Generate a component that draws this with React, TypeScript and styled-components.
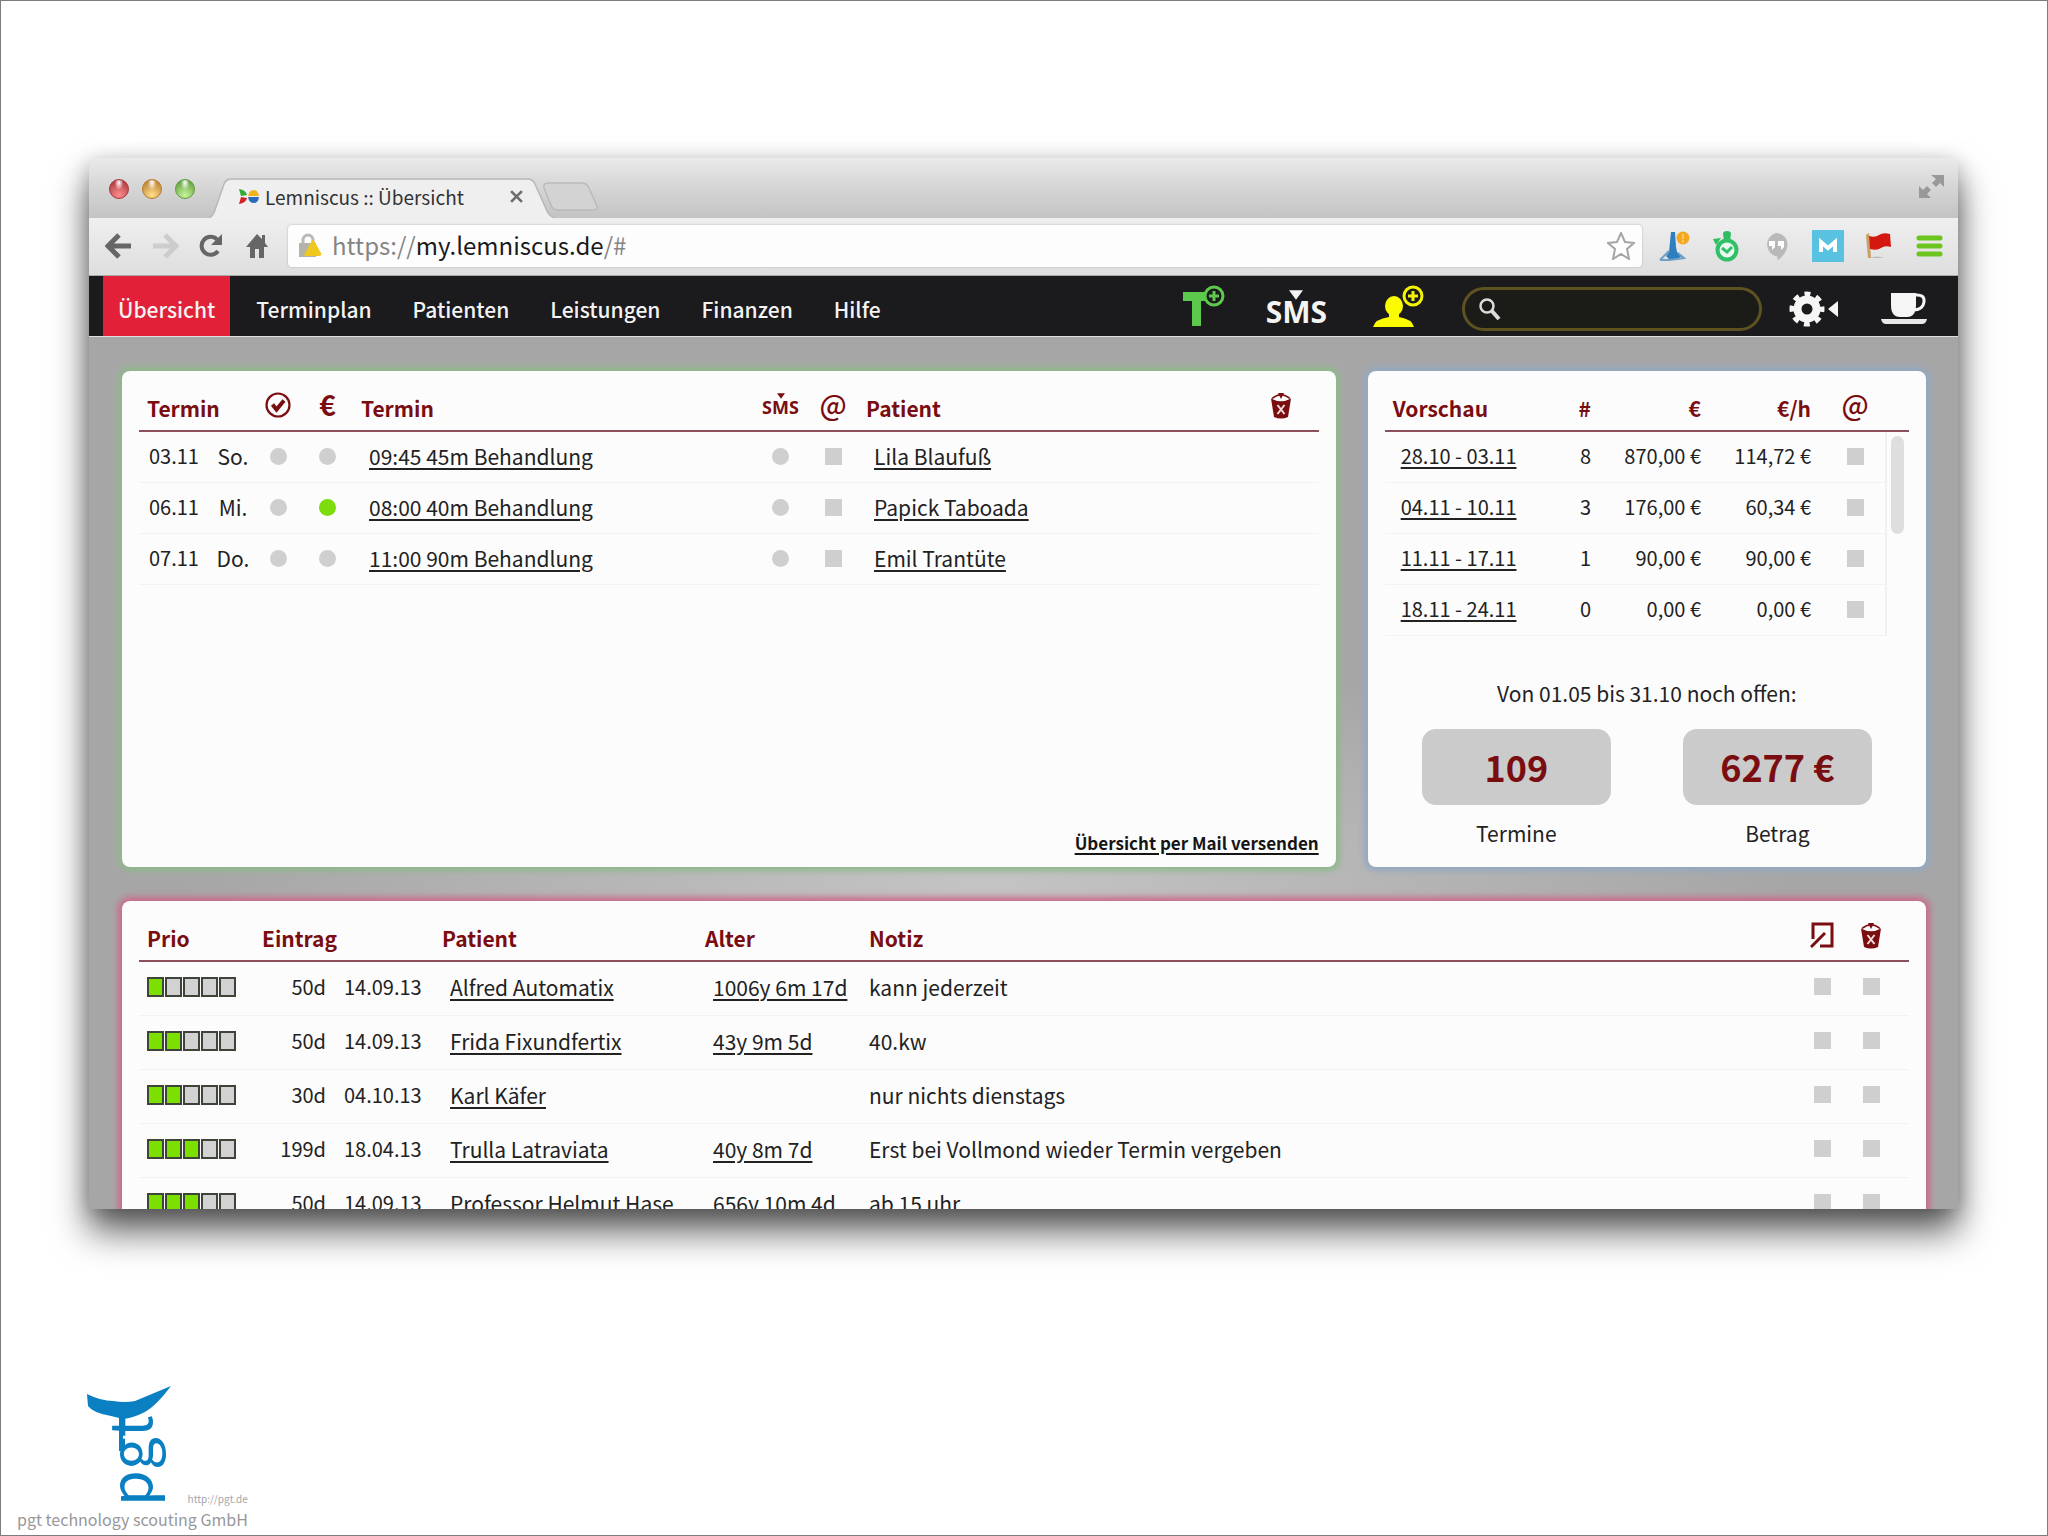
import React from "react";
import styled, { createGlobalStyle } from "styled-components";

const Global = createGlobalStyle`
  * { box-sizing: border-box; }
  body { margin: 0; background: #fff; }
  body, button, input { font-family: "Noto Sans CJK SC", "Noto Sans", sans-serif; font-size: 21px; line-height: 24px; color: #222; }
  button { padding: 0; border: 0; background: none; cursor: pointer; }
  a { color: inherit; }
  svg { display: block; flex: none; }
`;

const maroon = "#7a0d10";

/* ---------- page frame ---------- */

const Page = styled.div`
  height: 100vh;
  display: flex;
  flex-direction: column;
  border: 1px solid #7c7c80;
  padding: 157px 89px 0 88px;
`;

const Window = styled.main`
  flex: 1;
  min-height: 0;
  display: flex;
  flex-direction: column;
  border-radius: 4px 4px 0 0;
  box-shadow: 0 22px 36px rgba(0, 0, 0, 0.65), 0 4px 20px rgba(0, 0, 0, 0.2);
`;

/* ---------- browser chrome ---------- */

const TabStrip = styled.div`
  display: flex;
  align-items: flex-end;
  height: 60px;
  flex: none;
  padding: 0 14px 0 20px;
  background: linear-gradient(#eaeaea, #d9d9d9 40%, #c3c3c3);
  border-radius: 4px 4px 0 0;
`;

const Lights = styled.div`
  display: flex;
  gap: 13px;
  height: 40px;
  padding-top: 1px;
`;

const Light = styled.button<{ $edge: string; $core: string }>`
  width: 20px;
  height: 20px;
  border-radius: 50%;
  border: 1px solid ${(p) => p.$edge};
  background: radial-gradient(ellipse at 50% 15%, #fff 0, rgba(255, 255, 255, 0) 35%),
    radial-gradient(circle at 50% 85%, ${(p) => p.$core}, ${(p) => p.$edge} 90%);
`;

const Tab = styled.div`
  position: relative;
  display: flex;
  align-items: center;
  width: 346px;
  height: 40px;
  margin-left: 14px;
  padding: 0 32px 3px 29px;
  font-size: 19px;
  color: #333;
`;

const TabShape = styled.svg`
  position: absolute;
  inset: 0;
`;

const TabTitle = styled.span`
  position: relative;
  flex: 1;
  margin-left: 6px;
  white-space: nowrap;
`;

const TabIcon = styled.span`
  position: relative;
`;

const TabClose = styled.button`
  position: relative;
`;

const NewTab = styled.button`
  margin: 0 auto 7px -12px;
`;

const Fullscreen = styled.button`
  align-self: center;
  padding-bottom: 4px;
`;

const Toolbar = styled.div`
  display: flex;
  align-items: center;
  flex: none;
  height: 58px;
  padding: 0 12px 2px 16px;
  background: linear-gradient(#efefef, #dedede);
  border-bottom: 1px solid #aaa;
`;

const History = styled.div`
  display: flex;
  gap: 18px;
  margin-right: 17px;
`;

const Address = styled.form`
  flex: 1;
  display: flex;
  align-items: center;
  height: 42px;
  padding: 0 7px 0 10px;
  background: #fdfdfe;
  border-radius: 4px;
  box-shadow: 0 0 2px #a9a9a9;
`;

const Url = styled.a`
  flex: 1;
  margin-left: 10px;
  padding-bottom: 2px;
  font-size: 24px;
  color: #858585;
  text-decoration: none;
`;

const Host = styled.span`
  color: #1a1a1a;
`;

const Extensions = styled.div`
  display: flex;
  align-items: center;
  gap: 20px;
  margin-left: 16px;
`;

/* ---------- application bar ---------- */

const AppBar = styled.header`
  display: flex;
  align-items: center;
  flex: none;
  height: 61px;
  padding: 0 31px 0 14px;
  background: #1b1a1c;
  border-bottom: 1px solid #e0e0e0;
`;

const Menu = styled.nav`
  display: flex;
  gap: 11px;
  height: 100%;
  margin-right: auto;
`;

const MenuLink = styled.a<{ $active?: boolean }>`
  display: flex;
  align-items: center;
  padding: 6px 15px 0;
  color: #f3f3f3;
  font-weight: 500;
  text-decoration: none;
  background: ${(p) => (p.$active ? "#e22037" : "none")};
`;

const Tools = styled.div`
  display: flex;
  align-items: center;
  padding-top: 6px;
`;

const Tool = styled.button<{ $gap: number; $raised?: boolean }>`
  margin-right: ${(p) => p.$gap}px;
  padding-bottom: ${(p) => (p.$raised ? 6 : 0)}px;
`;

const Search = styled.label`
  display: flex;
  align-items: center;
  width: 300px;
  height: 44px;
  margin-right: 27px;
  padding: 0 14px;
  border: 3px solid #5d5220;
  border-radius: 22px;
  background: #1b1b18;
`;

const SearchInput = styled.input`
  flex: 1;
  min-width: 0;
  border: 0;
  outline: 0;
  background: none;
  color: #fff;
`;

const SmsStack = styled.span<{ $large?: boolean }>`
  display: flex;
  flex-direction: column;
  align-items: center;
  font-family: "Noto Sans", sans-serif;
  font-weight: 700;
  font-size: ${(p) => (p.$large ? 30 : 18)}px;
  line-height: ${(p) => (p.$large ? 24 : 16)}px;
  padding-bottom: ${(p) => (p.$large ? 4 : 2)}px;
  color: ${(p) => (p.$large ? "#f4f4f4" : maroon)};
`;

/* ---------- dashboard ---------- */

const Dashboard = styled.div`
  flex: 1;
  min-height: 0;
  overflow: hidden;
  display: grid;
  grid-template-columns: 1213fr 558fr;
  grid-template-rows: 496px auto;
  gap: 34px 32px;
  padding: 34px 32px 0 33px;
  background: radial-gradient(ellipse 800px 220px at 48% 545px, #c4c4c4, #a7a6a7);
`;

const Panel = styled.section<{ $glow: string; $wide?: boolean }>`
  display: flex;
  flex-direction: column;
  min-width: 0;
  grid-column: ${(p) => (p.$wide ? "1 / -1" : "auto")};
  padding: 0 17px 12px;
  border-radius: 8px;
  background: #fcfcfd;
  box-shadow: 0 0 6px 4px ${(p) => p.$glow};
`;

const Table = styled.table`
  width: 100%;
  table-layout: fixed;
  border-collapse: separate;
  border-spacing: 0;
`;

const Col = styled.col<{ $w?: number }>`
  width: ${(p) => (p.$w ? p.$w + "px" : "auto")};
`;

type Align = "left" | "right" | "center";

const Th = styled.th<{ $align?: Align }>`
  height: 61px;
  padding: 0 ${(p) => (p.$align === "right" ? 14 : 0)}px 10px ${(p) => (p.$align ? 0 : 8)}px;
  vertical-align: bottom;
  text-align: ${(p) => p.$align ?? "left"};
  font-weight: 700;
  color: ${maroon};
  border-bottom: 2px solid #8b525c;
`;

const Glyph = styled.span<{ $bold?: boolean; $text?: boolean }>`
  display: flex;
  align-items: center;
  justify-content: center;
  height: 30px;
  padding-bottom: ${(p) => (p.$text ? 2 : 0)}px;
  font-size: 28px;
  line-height: 28px;
  font-weight: ${(p) => (p.$bold ? 700 : 500)};
`;

const Td = styled.td<{ $tall?: boolean; $num?: boolean; $align?: Align; $left?: number; $right?: number }>`
  height: ${(p) => (p.$tall ? 54 : 51)}px;
  padding: 0 ${(p) => p.$right ?? 0}px ${(p) => (p.$tall ? 4 : 2)}px ${(p) => p.$left ?? 0}px;
  font-size: ${(p) => (p.$num ? 20 : 21)}px;
  text-align: ${(p) => p.$align ?? "left"};
  white-space: nowrap;
  border-bottom: 1px solid #f3f3f4;
`;

const Link = styled.a`
  text-underline-offset: 3px;
  text-decoration-thickness: 2px;
`;

const Mark = styled.input.attrs({ type: "checkbox" })<{ $round?: boolean }>`
  appearance: none;
  display: block;
  width: 17px;
  height: 17px;
  margin: 0 auto;
  border-radius: ${(p) => (p.$round ? "50%" : "0")};
  background: #cfcfcf;
  &:checked { background: #7cdc0c; }
`;

const MailLink = styled.a`
  align-self: flex-end;
  margin-top: auto;
  font-size: 17px;
  font-weight: 700;
  color: #151515;
  text-underline-offset: 3px;
  text-decoration-thickness: 2px;
`;

const ScrollCell = styled.td`
  padding: 4px 5px 0 4px;
  vertical-align: top;
  border-left: 2px solid #f1f1f2;
`;

const Thumb = styled.div`
  height: 98px;
  border-radius: 7px;
  background: #dedede;
`;

const Open = styled.p`
  margin: 45px 0 24px;
  text-align: center;
`;

const Totals = styled.div`
  display: flex;
  justify-content: center;
  gap: 72px;
`;

const Total = styled.div`
  width: 189px;
  text-align: center;
`;

const TotalValue = styled.div`
  padding: 19px 0 21px;
  margin-bottom: 16px;
  border-radius: 14px;
  background: #cbcbcc;
  color: ${maroon};
  font-size: 36px;
  line-height: 36px;
  font-weight: 700;
`;

const Bars = styled.div`
  display: flex;
  gap: 1px;
`;

const Bar = styled.span<{ $on: boolean }>`
  width: 17px;
  height: 20px;
  border: 2px solid #3f443b;
  background: ${(p) => (p.$on ? "#7be000" : "#d2d2d2")};
`;

/* ---------- footer ---------- */

const Footer = styled.footer`
  flex: none;
  height: 326px;
  display: flex;
  align-items: flex-end;
  margin-left: -72px;
`;

const Brand = styled.div`
  display: flex;
  flex-direction: column;
  color: #97979b;
`;

const BrandTop = styled.div`
  display: flex;
  align-items: flex-end;
  justify-content: space-between;
  padding-left: 68px;
`;

const BrandUrl = styled.a`
  font-size: 10px;
  line-height: 16px;
  text-decoration: none;
  color: #a5a5a8;
`;

const BrandName = styled.span`
  padding-bottom: 4px;
  font-size: 16px;
  white-space: nowrap;
`;

/* ---------- drawings ---------- */

const Sms = ({ large }: { large?: boolean }) => (
  <SmsStack $large={large}>
    <svg width={large ? 14 : 8} height={large ? 10 : 6} viewBox="0 0 12 8">
      <path d="M0 0h12L6 8z" fill="currentColor" />
    </svg>
    SMS
  </SmsStack>
);

const Trash = () => (
  <Glyph>
    <svg width="22" height="27" viewBox="0 0 22 27">
      <path d="M2 6.5Q11-1 20 6.5" fill="none" stroke={maroon} strokeWidth="1.6" />
      <path d="M8 1h6l-3 6z" fill={maroon} />
      <path d="M1 6.5Q11 12 21 6.5L18 25q-7 3-14 0z" fill={maroon} />
      <path d="M7.5 13l7 9M14.500 13l-7 9" stroke="#f3dede" strokeWidth="2" />
    </svg>
  </Glyph>
);

const CheckCircle = () => (
  <Glyph>
    <svg width="26" height="26" viewBox="0 0 26 26" fill="none" stroke={maroon}>
      <circle cx="13" cy="13" r="11.500" strokeWidth="2.200" />
      <path d="M7.500 12.500l4 5 7.500-9" strokeWidth="4" />
    </svg>
  </Glyph>
);

const EditBox = () => (
  <Glyph>
    <svg width="24" height="26" viewBox="0 0 24 26" fill="none" stroke={maroon} strokeWidth="3">
      <path d="M3 17V2h19v22H10" />
      <path d="M1 25L15 11" />
    </svg>
  </Glyph>
);

const Plus = ({ cx, cy, color }: { cx: number; cy: number; color: string }) => (
  <g fill="none" stroke={color}>
    <circle cx={cx} cy={cy} r="9" strokeWidth="3" fill="#1b1a1c" />
    <path d={`M${cx - 5} ${cy}h10M${cx} ${cy - 5}v10`} strokeWidth="3" />
  </g>
);

const arrow = "M14 2L3 13l11 11M4 13h22";

const appointments = [
  { date: "03.11", day: "So.", paid: false, slot: "09:45 45m Behandlung", patient: "Lila Blaufuß" },
  { date: "06.11", day: "Mi.", paid: true, slot: "08:00 40m Behandlung", patient: "Papick Taboada" },
  { date: "07.11", day: "Do.", paid: false, slot: "11:00 90m Behandlung", patient: "Emil Trantüte" },
];

const weeks = [
  ["28.10 - 03.11", "8", "870,00 €", "114,72 €"],
  ["04.11 - 10.11", "3", "176,00 €", "60,34 €"],
  ["11.11 - 17.11", "1", "90,00 €", "90,00 €"],
  ["18.11 - 24.11", "0", "0,00 €", "0,00 €"],
];

const waiting = [
  { prio: 1, days: "50d", date: "14.09.13", name: "Alfred Automatix", age: "1006y 6m 17d", note: "kann jederzeit" },
  { prio: 2, days: "50d", date: "14.09.13", name: "Frida Fixundfertix", age: "43y 9m 5d", note: "40.kw" },
  { prio: 2, days: "30d", date: "04.10.13", name: "Karl Käfer", age: "", note: "nur nichts dienstags" },
  { prio: 3, days: "199d", date: "18.04.13", name: "Trulla Latraviata", age: "40y 8m 7d", note: "Erst bei Vollmond wieder Termin vergeben" },
  { prio: 3, days: "50d", date: "14.09.13", name: "Professor Helmut Hase", age: "656y 10m 4d", note: "ab 15 uhr" },
];

const Chrome = () => (
  <>
    <TabStrip>
      <Lights>
        <Light $edge="#a8343c" $core="#ff8d8d" aria-label="Schließen" />
        <Light $edge="#b87a2c" $core="#ffe08a" aria-label="Minimieren" />
        <Light $edge="#5c9a3c" $core="#c8f59a" aria-label="Maximieren" />
      </Lights>
      <Tab>
        <TabShape width="346" height="40" viewBox="0 0 346 40">
          <path d="M0 40Q4 38 6 32L15 6Q17 1 23 1H318Q324 1 326 6L338 33Q341 39 346 40" fill="#efefef" stroke="#b8b8b8" strokeWidth="1.500" />
        </TabShape>
        <TabIcon>
          <svg width="21" height="15" viewBox="0 0 21 15">
            <path d="M1 0q7 1 8 6l-6 1z" fill="#35a83a" />
            <path d="M1 15q7-1 8-6l-6-1z" fill="#d3222a" />
            <path d="M10 7q1-6 6-6 4 0 5 6z" fill="#f0b51c" />
            <path d="M10 8q1 6 6 6 4 0 5-6z" fill="#2b6cb8" />
          </svg>
        </TabIcon>
        <TabTitle>Lemniscus :: Übersicht</TabTitle>
        <TabClose aria-label="Tab schließen">
          <svg width="13" height="13" viewBox="0 0 12 12" stroke="#6d6d6d" strokeWidth="2.500">
            <path d="M1 1l10 10M11 1L1 11" />
          </svg>
        </TabClose>
      </Tab>
      <NewTab aria-label="Neuer Tab">
        <svg width="56" height="29" viewBox="0 0 56 29">
          <path d="M5 1H38Q44 1 46 6L54 24Q55 28 50 28H15Q10 28 8 23L1 6Q0 1 5 1z" fill="#d3d3d3" stroke="#bababa" strokeWidth="1.500" />
        </svg>
      </NewTab>
      <Fullscreen aria-label="Vollbild">
        <svg width="25" height="25" viewBox="0 0 25 25" fill="#999">
          <path d="M12 1h13v12l-4-4-4 4-4-4 4-4z" />
          <path d="M0 12l4 4 4-4 4 4-4 4 4 4H0z" />
        </svg>
      </Fullscreen>
    </TabStrip>
    <Toolbar>
      <History>
        <button aria-label="Zurück">
          <svg width="28" height="26" viewBox="0 0 28 26" fill="none" stroke="#666" strokeWidth="5"><path d={arrow} /></svg>
        </button>
        <button aria-label="Vor">
          <svg width="28" height="26" viewBox="0 0 28 26" fill="none" stroke="#cdcdcd" strokeWidth="5"><path d={arrow} transform="matrix(-1 0 0 1 28 0)" /></svg>
        </button>
        <button aria-label="Neu laden">
          <svg width="28" height="26" viewBox="0 0 28 26">
            <path d="M21 18A9 9 0 1 1 20 6.500" fill="none" stroke="#666" strokeWidth="4" />
            <path d="M25 1v11H14z" fill="#666" />
          </svg>
        </button>
        <button aria-label="Startseite">
          <svg width="28" height="26" viewBox="0 0 28 26" fill="#666">
            <path d="M14 1L3 14h4v11h5v-9h4v9h5V14h4l-3-4V2h-3v4z" />
          </svg>
        </button>
      </History>
      <Address onSubmit={(e) => e.preventDefault()}>
        <svg width="24" height="25" viewBox="0 0 24 25">
          <path d="M5 12V7a5 5 0 0 1 10 0v5" fill="none" stroke="#b9b9b9" strokeWidth="3" />
          <path d="M1 10h17v14H1z" fill="#b5b2ab" />
          <path d="M15 6l8 14q1 3-2 3H8q-3 0-1-3z" fill="#eec81c" />
        </svg>
        <Url href="#">https://<Host>my.lemniscus.de</Host>/#</Url>
        <button type="button" aria-label="Lesezeichen">
          <svg width="28" height="28" viewBox="0 0 28 28">
            <path d="M14 1l4 9 9 1-7 6 2 10-8-5-8 5 2-10-7-6 9-1z" fill="#fff" stroke="#a5a5a5" strokeWidth="2" />
          </svg>
        </button>
      </Address>
      <Extensions>
        <button aria-label="Erweiterung Statue">
          <svg width="32" height="32" viewBox="0 0 32 32">
            <path d="M13 2h4l1 15 1 5 5 4-5 3h-8l-3-3 3-4z" fill="#2f7fc0" />
            <path d="M2 30l9-9M2 30h10l14-2-6-5" fill="none" stroke="#6f9fc4" strokeWidth="2" />
            <circle cx="25" cy="8" r="6.500" fill="#f4a822" />
            <path d="M25 4v5M25 10v3" stroke="#fbc65c" strokeWidth="2" />
          </svg>
        </button>
        <button aria-label="Erweiterung Uhr">
          <svg width="32" height="32" viewBox="0 0 32 32">
            <path d="M13 4q0-3 4-3t4 3l-1 7h-6zM3 9l8-1-5 7z" fill="#2fbe62" />
            <circle cx="17" cy="20" r="9.500" fill="#eafaf0" stroke="#2fc068" strokeWidth="4" />
            <path d="M12 18l5 4 5-5" fill="none" stroke="#2fc068" strokeWidth="3" />
          </svg>
        </button>
        <button aria-label="Hangouts">
          <svg width="30" height="32" viewBox="0 0 30 32">
            <path d="M14 3a11.500 11.500 0 0 1 11.500 11.500c0 7-5 12-10 16v-4A12 12 0 0 1 14 3z" fill="#b9b9b9" />
            <path d="M7 11h6v6l-3 3v-4H7zM16 11h6v6l-3 3v-4h-3z" fill="#fff" />
          </svg>
        </button>
        <button aria-label="Erweiterung M">
          <svg width="32" height="32" viewBox="0 0 32 32">
            <path d="M0 0h32v32H0z" fill="#58c2e0" />
            <path d="M9 22V12l7 6 7-6v10" fill="none" stroke="#fff" strokeWidth="4" />
          </svg>
        </button>
        <button aria-label="Erweiterung Flagge">
          <svg width="28" height="32" viewBox="0 0 28 32">
            <path d="M5 28q8-3 15 0z" fill="#bbb" />
            <path d="M2 5l3-2 2 25H4z" fill="#c9a060" />
            <path d="M5 6q6 2 10-1t11-1l1 13q-6-2-10 1t-11 1z" fill="#d4180f" />
          </svg>
        </button>
        <button aria-label="Menü">
          <svg width="34" height="32" viewBox="0 0 34 32" stroke="#6cc41e" strokeWidth="5" strokeLinecap="round">
            <path d="M7 8h21M7 16h21M7 24h21" />
          </svg>
        </button>
      </Extensions>
    </Toolbar>
  </>
);

const TopBar = () => (
  <AppBar>
    <Menu>
      {["Übersicht", "Terminplan", "Patienten", "Leistungen", "Finanzen", "Hilfe"].map((m, i) => (
        <MenuLink key={m} href="#" $active={i === 0}>{m}</MenuLink>
      ))}
    </Menu>
    <Tools>
      <Tool $gap={41} $raised aria-label="Neuer Termin">
        <svg width="43" height="42" viewBox="0 0 43 42">
          <path d="M1 7h27v9h-9v25h-9V16H1z" fill="#5cc84c" />
          <Plus cx={32} cy={11} color="#5cc84c" />
        </svg>
      </Tool>
      <Tool $gap={45}><Sms large /></Tool>
      <Tool $gap={36} $raised aria-label="Neuer Patient">
        <svg width="54" height="44" viewBox="0 0 54 44">
          <g fill="#fcfc00">
            <ellipse cx="22" cy="22" rx="9" ry="10" />
            <path d="M17 28h10v5q13 2 15 10H1q2-8 16-10z" />
          </g>
          <Plus cx={41} cy={12} color="#f4f400" />
        </svg>
      </Tool>
      <Search>
        <svg width="22" height="23" viewBox="0 0 22 23" fill="none" stroke="#dcdcdc">
          <circle cx="8" cy="8" r="6.500" strokeWidth="2.500" />
          <path d="M12 12l8 9" strokeWidth="4" />
        </svg>
        <SearchInput aria-label="Suche" />
      </Search>
      <Tool $gap={42} aria-label="Einstellungen">
        <svg width="50" height="36" viewBox="0 0 50 36">
          <g fill="none" stroke="#f5f5f5">
            <circle cx="18" cy="18" r="9.500" strokeWidth="8" />
            <circle cx="18" cy="18" r="15" strokeWidth="5" strokeDasharray="5.890 5.890" strokeDashoffset="2.945" />
          </g>
          <path d="M49 10v16l-10-8z" fill="#f5f5f5" />
        </svg>
      </Tool>
      <Tool $gap={0} aria-label="Pause">
        <svg width="46" height="34" viewBox="0 0 46 34">
          <path d="M10 1h25v12q0 12-9 12h-7q-9 0-9-12z" fill="#f5f5f5" />
          <path d="M34 3q10-1 9 7t-11 8" fill="none" stroke="#f5f5f5" strokeWidth="3" />
          <path d="M0 27h46q-1 5-5 5H5q-4 0-5-5z" fill="#e8e8e8" />
        </svg>
      </Tool>
    </Tools>
  </AppBar>
);

const Appointments = () => (
  <Panel $glow="#8fb98b">
    <Table>
      <colgroup>
        {[73, 42, 48, 51, 400, 55, 50].map((w, i) => <Col key={i} $w={w} />)}
        <Col />
        <Col $w={76} />
      </colgroup>
      <thead>
        <tr>
          <Th colSpan={2}>Termin</Th>
          <Th $align="center" aria-label="Erledigt"><CheckCircle /></Th>
          <Th $align="center"><Glyph $bold $text>€</Glyph></Th>
          <Th>Termin</Th>
          <Th $align="center"><Glyph><Sms /></Glyph></Th>
          <Th $align="center"><Glyph $text>@</Glyph></Th>
          <Th>Patient</Th>
          <Th $align="center" aria-label="Löschen"><Trash /></Th>
        </tr>
      </thead>
      <tbody>
        {appointments.map((a) => (
          <tr key={a.date}>
            <Td $num $left={10}>{a.date}</Td>
            <Td $align="center">{a.day}</Td>
            <Td><Mark $round aria-label="Erledigt" /></Td>
            <Td><Mark $round defaultChecked={a.paid} aria-label="Bezahlt" /></Td>
            <Td $left={16}><Link href="#">{a.slot}</Link></Td>
            <Td><Mark $round aria-label="SMS" /></Td>
            <Td><Mark aria-label="E-Mail" /></Td>
            <Td $left={16}><Link href="#">{a.patient}</Link></Td>
            <Td />
          </tr>
        ))}
      </tbody>
    </Table>
    <MailLink href="#">Übersicht per Mail versenden</MailLink>
  </Panel>
);

const Preview = () => (
  <Panel $glow="#93a9c0">
    <Table>
      <colgroup>
        <Col />
        {[66, 110, 110, 60, 24].map((w, i) => <Col key={i} $w={w} />)}
      </colgroup>
      <thead>
        <tr>
          <Th>Vorschau</Th>
          <Th $align="right">#</Th>
          <Th $align="right">€</Th>
          <Th $align="right">€/h</Th>
          <Th $align="center"><Glyph $text>@</Glyph></Th>
          <Th />
        </tr>
      </thead>
      <tbody>
        {weeks.map((w, i) => (
          <tr key={w[0]}>
            <Td $num $left={16}><Link href="#">{w[0]}</Link></Td>
            <Td $num $align="right" $right={14}>{w[1]}</Td>
            <Td $num $align="right" $right={14}>{w[2]}</Td>
            <Td $num $align="right" $right={14}>{w[3]}</Td>
            <Td><Mark aria-label="E-Mail" /></Td>
            {i === 0 && <ScrollCell rowSpan={4}><Thumb /></ScrollCell>}
          </tr>
        ))}
      </tbody>
    </Table>
    <Open>Von 01.05 bis 31.10 noch offen:</Open>
    <Totals>
      <Total><TotalValue>109</TotalValue>Termine</Total>
      <Total><TotalValue>6277 €</TotalValue>Betrag</Total>
    </Totals>
  </Panel>
);

const WaitingList = () => (
  <Panel $glow="#c96c8c" $wide>
    <Table>
      <colgroup>
        {[115, 80, 100, 263, 164].map((w, i) => <Col key={i} $w={w} />)}
        <Col />
        {[50, 48, 14].map((w, i) => <Col key={i} $w={w} />)}
      </colgroup>
      <thead>
        <tr>
          <Th>Prio</Th>
          <Th colSpan={2}>Eintrag</Th>
          <Th>Patient</Th>
          <Th>Alter</Th>
          <Th>Notiz</Th>
          <Th $align="center" aria-label="Bearbeiten"><EditBox /></Th>
          <Th $align="center" aria-label="Löschen"><Trash /></Th>
          <Th />
        </tr>
      </thead>
      <tbody>
        {waiting.map((w) => (
          <tr key={w.name}>
            <Td $tall $left={8}>
              <Bars role="img" aria-label={`Priorität ${w.prio} von 5`}>
                {[1, 2, 3, 4, 5].map((n) => <Bar key={n} $on={n <= w.prio} />)}
              </Bars>
            </Td>
            <Td $tall $num $align="right" $right={8}>{w.days}</Td>
            <Td $tall $num $left={10}>{w.date}</Td>
            <Td $tall $left={16}><Link href="#">{w.name}</Link></Td>
            <Td $tall $left={16}>{w.age && <Link href="#">{w.age}</Link>}</Td>
            <Td $tall $left={8}>{w.note}</Td>
            <Td $tall><Mark aria-label="Bearbeiten" /></Td>
            <Td $tall><Mark aria-label="Löschen" /></Td>
            <Td $tall />
          </tr>
        ))}
      </tbody>
    </Table>
  </Panel>
);

const App = () => (
  <>
    <Global />
    <Page>
      <Window>
        <Chrome />
        <TopBar />
        <Dashboard>
          <Appointments />
          <Preview />
          <WaitingList />
        </Dashboard>
      </Window>
      <Footer>
        <Brand>
          <BrandTop>
            <svg width="88" height="122" viewBox="0 0 88 122">
              <path d="M2 9q14 7 26 7 12 2 22 0Q62 11 86 1 72 20 60 27q-12 6-22 7l-1 6h-3V33q-4-1-8-2Q8 28 3 21z" fill="#0a7fc2" />
              <path d="M36 32v34" stroke="#0a7fc2" strokeWidth="4" />
              <text transform="translate(67 121) rotate(-90)" fontSize="58" fill="#0a7fc2">pgt</text>
            </svg>
            <BrandUrl href="#">http://pgt.de</BrandUrl>
          </BrandTop>
          <BrandName>pgt technology scouting GmbH</BrandName>
        </Brand>
      </Footer>
    </Page>
  </>
);

export default App;
